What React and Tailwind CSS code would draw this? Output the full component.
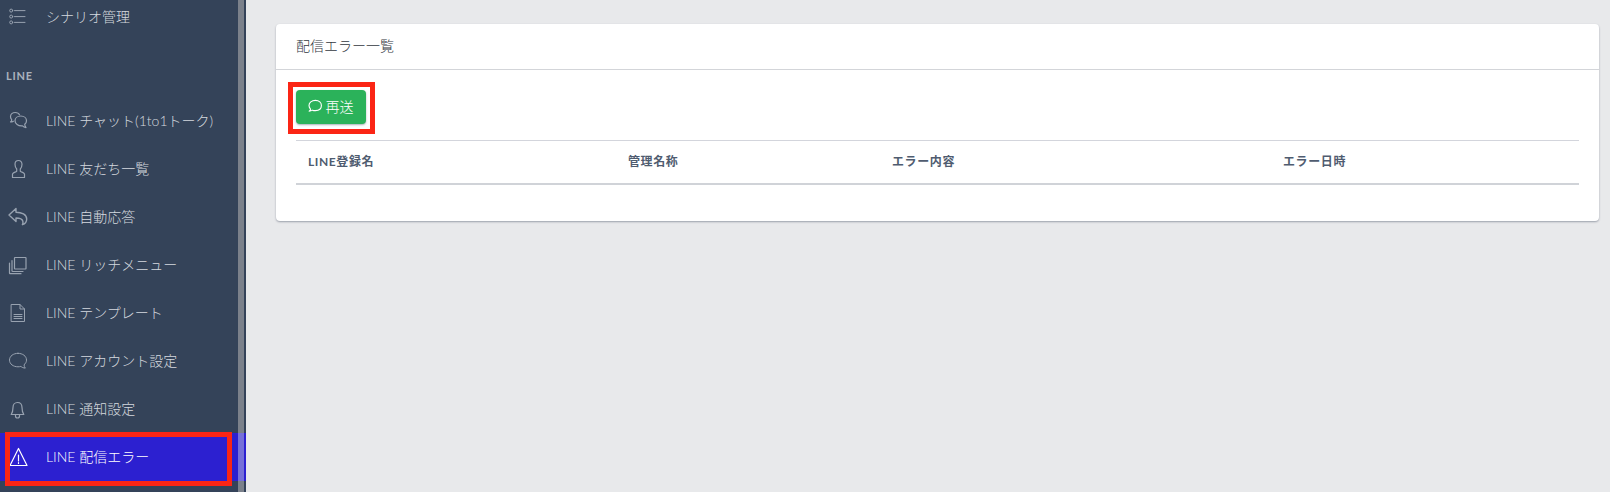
import React from "react";

const S = { fill: "none", stroke: "currentColor", strokeWidth: 1, strokeLinecap: "round", strokeLinejoin: "round" };

const Ic = ({ children, w = 1 }) => (
  <svg width="20" height="20" viewBox="0 0 20 20" {...S} strokeWidth={w}>{children}</svg>
);

const icons = {
  list: (
    <Ic>
      <circle cx="3.2" cy="3.6" r="1.5" /><circle cx="3.2" cy="9.6" r="1.5" /><circle cx="3.2" cy="15.4" r="1.5" />
      <path d="M6.5 3.6H17M6.5 9.6H17M6.5 15.4H17" />
    </Ic>
  ),
  chat: (
    <Ic w={1.2}>
      <path d="M11.500 3.800C10.800 2.300 9 1.500 7.300 1.500 4.500 1.500 2.500 3.400 2.500 5.800c0 1.200.5 2.200 1.300 3-.1.900-.5 1.600-1.300 2.200 1.200 0 2.100-.3 2.900-.8" />
      <path d="M12.800 5c3.300 0 5.700 2.100 5.700 4.800 0 1.500-.7 2.700-1.800 3.500.1 1.400.6 2.300 1.300 3.300-1.500-.2-2.700-.8-3.500-1.700C10 15.300 7 12.600 7 9.800 7 7.100 9.500 5 12.800 5z" />
    </Ic>
  ),
  user: (
    <Ic w={1.2}>
      <path d="M10.500 1.500c-2.200 0-3.500 1.600-3.500 3.800 0 1.900.7 3.600 1.700 4.700v2.200c-1.200 1-3.400 1.300-4.200 2.800v3.500h12v-3.500c-.8-1.500-3-1.800-4.200-2.800V10c1-1.100 1.700-2.800 1.700-4.700 0-2.200-1.300-3.800-3.500-3.800z" />
    </Ic>
  ),
  reply: (
    <Ic w={1.4}>
      <path d="M8 1.500 1 8l7 6.500v-3.500c3.500 0 6 .3 6.800 3 .4 1.400.2 2.600-.4 3.700 2.800-.9 4.300-3 4.300-5.700C18.700 7.500 13.500 5.300 8 5.300z" />
    </Ic>
  ),
  copy: (
    <Ic w={1.2}>
      <rect x="6.500" y="2.500" width="11.500" height="11.500" rx="0.500" />
      <path d="M4 5.500v10.300a.7.7 0 0 0 .7.7H15" />
      <path d="M1.500 8v10a.7.7 0 0 0 .7.7H13" />
    </Ic>
  ),
  file: (
    <Ic>
      <path d="M3.500 1.500h8.500l4.500 4.500v12.500h-13z" />
      <path d="M12 1.500V6h4.500" />
      <path d="M6 11.500h8M6 13.500h8M6 15.500h8" />
    </Ic>
  ),
  bubble: (
    <Ic>
      <path d="M10 2.300c-4.700 0-8.500 2.800-8.500 6.800 0 3.900 3.800 6.700 8.500 6.700 1 0 2-.1 2.900-.4 1 .9 2.600 1.700 4.400 1.700-.7-.8-1.200-2-1.300-3.300 1.500-1.200 2.500-2.800 2.500-4.700 0-4-3.800-6.800-8.500-6.800z" />
    </Ic>
  ),
  bell: (
    <Ic w={1.2}>
      <path d="M9.500 3.500c-2.700 0-4.500 2.100-4.500 5 0 3.500-.6 5.300-1.800 7h12.600c-1.200-1.700-1.800-3.500-1.800-7 0-2.900-1.800-5-4.500-5z" />
      <path d="M7.500 15.500v1.500a2 2 0 0 0 4 0v-1.500" />
    </Ic>
  ),
  warn: (
    <Ic w={1.2}>
      <path d="M10.500 1.500 2 18.500h17z" />
      <path d="M10.500 8v6M10.500 15.500v1" />
    </Ic>
  ),
};

const items = [
  ["chat", "LINE チャット(1to1トーク)"],
  ["user", "LINE 友だち一覧"],
  ["reply", "LINE 自動応答"],
  ["copy", "LINE リッチメニュー"],
  ["file", "LINE テンプレート"],
  ["bubble", "LINE アカウント設定"],
  ["bell", "LINE 通知設定"],
];

const Row = ({ icon, label, active }) => (
  <div className={`flex h-12 items-center pl-[8px] text-[14px] font-light ${active ? "bg-[#2c20d0] text-white" : "text-[#d5d9df]"}`}>
    <span className={`flex w-[20px] shrink-0 justify-center ${active ? "text-white" : "text-[#98a2b0]"}`}>{icons[icon]}</span>
    <span className="ml-[18px] -translate-y-[1px] whitespace-nowrap">{label}</span>
  </div>
);

const Mark = ({ className }) => (
  <div className={`pointer-events-none absolute border-[5px] border-[#fb2515] ${className}`} />
);

export default function App() {
  return (
    <div
      className="flex h-[492px] w-[1610px] overflow-hidden bg-[#e8e9eb]"
      style={{ fontFamily: 'Lato, "Noto Sans CJK JP", sans-serif' }}
    >
      <aside className="relative flex h-full w-[246px] shrink-0 bg-[#344359]">
        <div className="-mt-[7px] w-[238px] shrink-0">
          <Row icon="list" label="シナリオ管理" />
          <div className="flex h-[48px] items-end pb-[8px] pl-[6px] pt-[30px]">
            <span className="text-[11px] font-bold leading-none tracking-[0.07em] text-[#aab2bd]">LINE</span>
          </div>
          <div className="h-[8px]" />
          {items.map(([i, l]) => (
            <Row key={l} icon={i} label={l} />
          ))}
          <Row icon="warn" label="LINE 配信エラー" active />
        </div>
        <div className="flex h-full w-[6px] shrink-0 flex-col bg-[#7b818b]">
          <div className="h-[433px]" />
          <div className="h-[48px] bg-[#7670d8]" />
        </div>
        <div className="flex h-full w-[2px] shrink-0 flex-col bg-[#344359]">
          <div className="h-[433px]" />
          <div className="h-[48px] bg-[#2c20d0]" />
        </div>
        <Mark className="left-[5px] top-[432px] h-[54px] w-[227px]" />
      </aside>

      <main className="min-w-0 flex-1 pl-[30px] pr-[11px] pt-[24px]">
        <section className="rounded-[4px] bg-white shadow-[0_1px_2px_rgba(60,70,90,0.45)]">
          <header className="flex h-[46px] items-center border-b border-[#d3d5d9] px-[20px] pb-[2px] text-[14px] font-light text-[#33383f]">
            配信エラー一覧
          </header>
          <div className="px-[20px] pt-[20px] pb-[36px]">
            <div className="relative h-[50px]">
              <button className="flex h-[34px] w-[70px] items-center justify-center gap-[3px] rounded-[4px] bg-[#2bb25a] pb-[2px] pr-[2px] text-[14px] font-light text-white shadow-[0_1px_2px_rgba(40,60,80,0.4)]">
                <svg width="16" height="16" viewBox="0 0 20 20" {...S} strokeWidth="1.400">
                  <path d="M10.500 3C5.800 3 2.500 5.800 2.500 9.500c0 1.700.8 3.200 2 4.300-.2 1-.8 2-1.800 2.700 1.600 0 3-.5 4-1.300 1.100.4 2.400.6 3.800.6 4.700 0 7.500-2.700 7.500-6.300S15.200 3 10.500 3z" />
                </svg>
                再送
              </button>
              <Mark className="-left-[8px] -top-[8px] h-[52px] w-[87px]" />
            </div>
            <table className="w-full table-fixed border-collapse">
              <thead>
                <tr className="h-[43px] border-y border-y-[#d3d5dc] border-b-2 border-b-[#d0d3d8] text-left text-[12px] font-bold tracking-[0.05em] text-[#4f5c70]">
                  <th className="w-[320px] pl-[12px] font-bold">LINE登録名</th>
                  <th className="w-[264px] pl-[12px] font-bold">管理名称</th>
                  <th className="w-[391px] pl-[12px] font-bold">エラー内容</th>
                  <th className="pl-[12px] font-bold">エラー日時</th>
                </tr>
              </thead>
            </table>
          </div>
        </section>
      </main>
    </div>
  );
}
